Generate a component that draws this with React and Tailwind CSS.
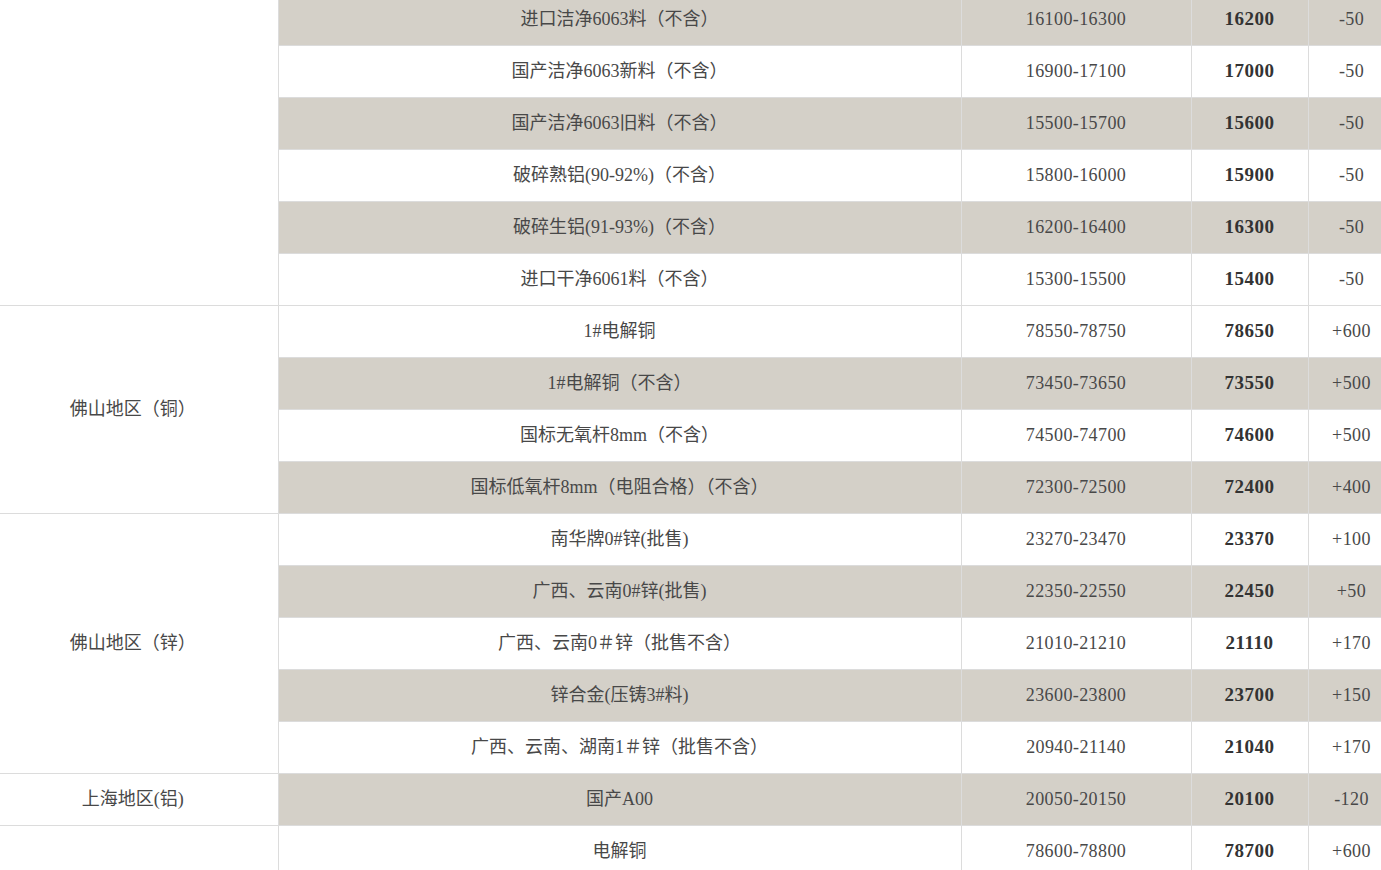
import React from "react";

const groups = [
  {
    name: "",
    rows: [
      ["进口洁净6063料（不含）", "16100-16300", "16200", "-50"],
      ["国产洁净6063新料（不含）", "16900-17100", "17000", "-50"],
      ["国产洁净6063旧料（不含）", "15500-15700", "15600", "-50"],
      ["破碎熟铝(90-92%)（不含）", "15800-16000", "15900", "-50"],
      ["破碎生铝(91-93%)（不含）", "16200-16400", "16300", "-50"],
      ["进口干净6061料（不含）", "15300-15500", "15400", "-50"],
    ],
  },
  {
    name: "佛山地区（铜）",
    rows: [
      ["1#电解铜", "78550-78750", "78650", "+600"],
      ["1#电解铜（不含）", "73450-73650", "73550", "+500"],
      ["国标无氧杆8mm（不含）", "74500-74700", "74600", "+500"],
      ["国标低氧杆8mm（电阻合格）（不含）", "72300-72500", "72400", "+400"],
    ],
  },
  {
    name: "佛山地区（锌）",
    rows: [
      ["南华牌0#锌(批售)", "23270-23470", "23370", "+100"],
      ["广西、云南0#锌(批售)", "22350-22550", "22450", "+50"],
      ["广西、云南0＃锌（批售不含）", "21010-21210", "21110", "+170"],
      ["锌合金(压铸3#料)", "23600-23800", "23700", "+150"],
      ["广西、云南、湖南1＃锌（批售不含）", "20940-21140", "21040", "+170"],
    ],
  },
  {
    name: "上海地区(铝)",
    rows: [["国产A00", "20050-20150", "20100", "-120"]],
  },
  {
    name: "",
    rows: [["电解铜", "78600-78800", "78700", "+600"]],
  },
];

// shading restarts after the first block in the source page
const shade = (i) => (i < 6 ? i % 2 === 0 : (i - 6) % 2 === 1);

const cjk = "font-['Liberation_Serif','Noto_Sans_CJK_SC',serif]";
const num = "font-['Liberation_Serif',serif] text-[18px] tracking-[0.4px]";

export default function App() {
  let index = 0;

  return (
    <div className="h-[870px] w-[1381px] overflow-hidden bg-white">
      <table className="-mt-[7px] w-[1395px] table-fixed border-collapse text-[#484848]">
        <colgroup>
          <col className="w-[278px]" />
          <col className="w-[683px]" />
          <col className="w-[230px]" />
          <col className="w-[117px]" />
          <col className="w-[87px]" />
        </colgroup>
        <tbody>
          {groups.map((group, g) =>
            group.rows.map((row, r) => {
              const shaded = shade(index++);
              return (
                <tr key={g + "-" + r} className={shaded ? "bg-[#d4d0c8]" : "bg-white"}>
                  {r === 0 && (
                    <td
                      rowSpan={group.rows.length}
                      className={`border border-l-0 border-[#dcdcdc] bg-white pr-[12px] text-center text-[18px] ${cjk}`}
                    >
                      {group.name}
                    </td>
                  )}
                  <td className={`h-[52px] border border-[#dcdcdc] text-center text-[18px] ${cjk}`}>
                    {row[0]}
                  </td>
                  <td className={`border border-[#dcdcdc] text-center ${num}`}>{row[1]}</td>
                  <td className="border border-[#dcdcdc] text-center font-['Liberation_Serif',serif] text-[19px] font-bold tracking-[0.5px] text-[#333]">
                    {row[2]}
                  </td>
                  <td className={`border border-[#dcdcdc] text-center ${num}`}>{row[3]}</td>
                </tr>
              );
            })
          )}
        </tbody>
      </table>
    </div>
  );
}
